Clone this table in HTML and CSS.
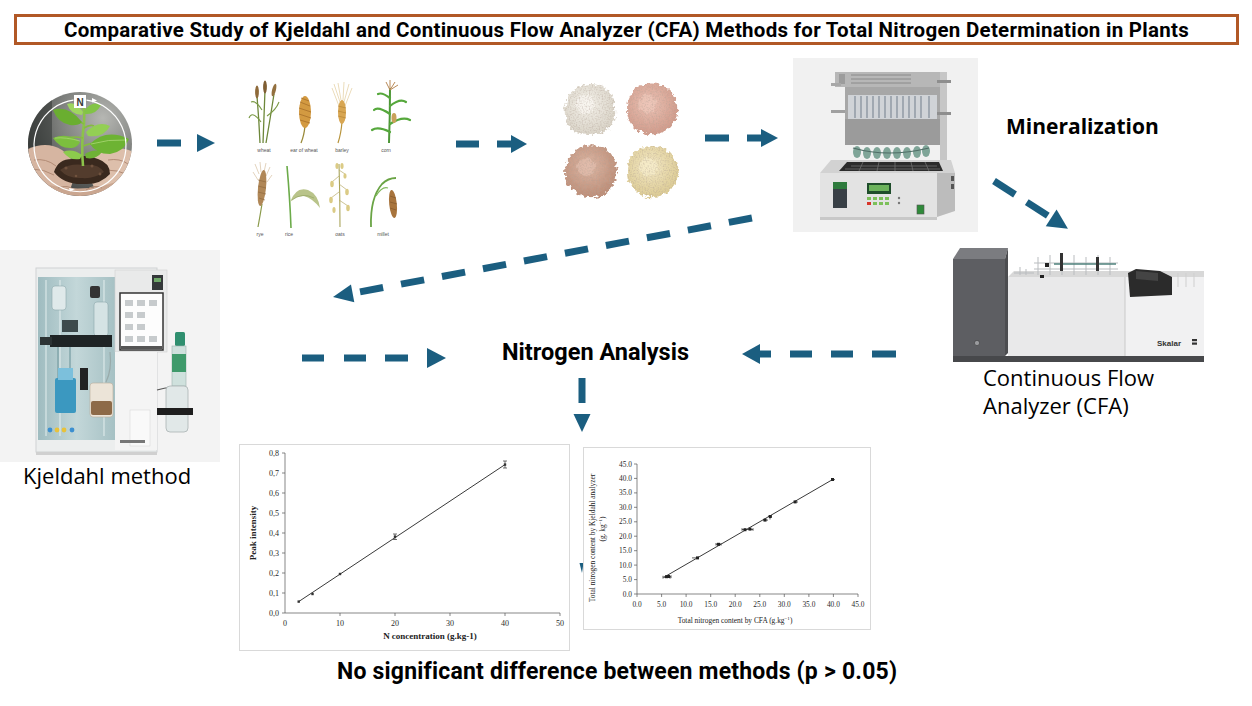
FILE: index.html
```html
<!DOCTYPE html>
<html lang="en">
<head>
<meta charset="utf-8">
<title>Kjeldahl vs CFA – Total Nitrogen</title>
<link rel="stylesheet" href="styles.css">
</head>
<body>
<div class="canvas">
  <header class="title">Comparative Study of Kjeldahl and Continuous Flow Analyzer (CFA) Methods for Total Nitrogen Determination in Plants</header>

  <!-- plant with nitrogen cycle -->
  <div class="node plant">
    <svg viewBox="0 0 104 104" width="104" height="104">
      <defs>
        <radialGradient id="pbg" cx="0.72" cy="0.25" r="0.85">
          <stop offset="0" stop-color="#b6b7b3"/>
          <stop offset="0.5" stop-color="#7d7f7c"/>
          <stop offset="1" stop-color="#363938"/>
        </radialGradient>
        <clipPath id="pclip"><circle cx="52" cy="52" r="52"/></clipPath>
      </defs>
      <g clip-path="url(#pclip)">
        <rect width="104" height="104" fill="url(#pbg)"/>
        <rect x="0" y="0" width="24" height="62" fill="#2c2f2e" opacity="0.5"/>
        <path d="M-2 58 Q18 48 34 58 Q46 66 48 80 L40 104 L-2 104Z" fill="#d6b5a1"/>
        <path d="M106 60 Q86 52 72 60 Q60 70 60 82 L70 104 L106 104Z" fill="#ddbfab"/>
        <path d="M0 86 Q52 108 104 84 L104 104 L0 104Z" fill="#caa690"/>
        <path d="M6 68 Q18 66 28 74 M4 77 Q16 77 26 83 M80 68 Q92 66 100 72 M78 78 Q90 78 98 82 M30 96 Q40 92 46 98 M58 98 Q66 92 74 96" stroke="#b28b75" stroke-width="1" fill="none"/>
        <path d="M26 80 Q30 67 44 67 Q56 61 70 67 Q82 71 82 82 Q72 93 56 92 Q36 93 26 80Z" fill="#3a291e"/>
        <path d="M32 78 Q42 71 56 73 Q70 71 76 80 Q66 87 54 86 Q40 87 32 78Z" fill="#5a4131" opacity="0.8"/>
        <g fill="#70523e"><circle cx="38" cy="76" r="1.6"/><circle cx="64" cy="74" r="1.5"/><circle cx="48" cy="84" r="1.3"/><circle cx="72" cy="82" r="1.4"/></g>
        <path d="M55 74 Q53 52 56 32 Q57 22 55 12" stroke="#8cc24a" stroke-width="2.6" fill="none"/>
        <path d="M55 54 Q64 50 70 52 M55 46 Q46 44 40 46 M56 32 Q48 28 44 26 M56 36 Q62 32 66 34" stroke="#86bb42" stroke-width="1.6" fill="none"/>
        <path d="M62 52 Q78 36 101 47 Q96 60 82 62 Q68 62 62 52Z" fill="#6db333"/>
        <path d="M63 52 Q80 47 99 48" stroke="#b3dd7f" stroke-width="0.7" fill="none"/>
        <path d="M58 40 Q70 28 82 34 Q76 46 60 44Z" fill="#93cf54"/>
        <path d="M52 50 Q40 40 25 46 Q32 57 44 56 Q50 55 52 50Z" fill="#7cbf3e"/>
        <path d="M52 49 Q38 45 27 46" stroke="#b8e084" stroke-width="0.6" fill="none"/>
        <path d="M54 30 Q40 13 25 18 Q30 31 42 33 Q50 34 54 30Z" fill="#6aae30"/>
        <path d="M55 20 Q48 9 39 12 Q43 23 54 23Z" fill="#9fd660"/>
        <path d="M56 19 Q64 8 73 13 Q68 23 57 22Z" fill="#82c446"/>
        <path d="M54 63 Q44 56 35 60 Q42 69 52 67Z" fill="#8ccb4c"/>
        <path d="M57 62 Q66 56 74 60 Q68 68 58 66Z" fill="#6fb236"/>
      </g>
      <path d="M45.5 8.2 A46 46 0 1 0 58.5 8.2" fill="none" stroke="#fff" stroke-width="1.2"/>
      <polygon points="64,6 69,8.5 64,10.5" fill="#fff"/>
      <polygon points="41,96 47,97 42,99.5" fill="#fff"/>
      <rect x="46" y="3" width="12" height="13" fill="#fff"/>
      <text x="52" y="13.5" text-anchor="middle" class="n-letter">N</text>
    </svg>
  </div>

  <!-- cereal illustrations -->
  <div class="node grains">
    <svg viewBox="0 0 165 162" width="165" height="162">
      <path d="M12 63 Q11 40 9 16 M15 63 Q16 38 17 10 M18 63 Q22 40 26 14" stroke="#6d873a" stroke-width="1.3" fill="none"/>
      <path d="M13 42 Q4 30 1 38 M14 30 Q8 20 3 22 M19 36 Q28 30 31 22" stroke="#7b9a46" stroke-width="1.1" fill="none"/>
      <ellipse cx="9" cy="12" rx="1.9" ry="6.5" fill="#8e6a3a"/>
      <ellipse cx="17" cy="7" rx="1.9" ry="6.5" fill="#7f5e33"/>
      <ellipse cx="26" cy="10" rx="1.9" ry="6.5" fill="#93703f" transform="rotate(14 26 10)"/>
      <path d="M57 46 Q56 56 53 63" stroke="#9a8a3a" stroke-width="1.3" fill="none"/>
      <ellipse cx="57" cy="32" rx="6" ry="16" fill="#d39a41"/>
      <path d="M52 22 L62 26 M51 28 L63 32 M51 34 L63 38 M52 40 L62 43 M53 18 L61 21" stroke="#a8702a" stroke-width="0.8"/>
      <path d="M94 42 Q93 54 90 63" stroke="#b8943c" stroke-width="1.2" fill="none"/>
      <path d="M92 22 L86 4 M93 20 L90 3 M95 20 L96 2 M96 22 L101 4 M97 26 L104 8 M91 26 L84 8" stroke="#d7b875" stroke-width="0.5"/>
      <ellipse cx="94" cy="32" rx="4" ry="12" fill="#d8a652"/>
      <path d="M90 26 L98 28 M90 31 L98 33 M90 36 L98 38" stroke="#b07f30" stroke-width="0.6"/>
      <path d="M141 63 Q142 36 142 8" stroke="#4c9636" stroke-width="2" fill="none"/>
      <path d="M142 52 Q130 46 124 50 M142 44 Q154 36 162 40 M142 34 Q130 26 126 30 M142 26 Q152 18 158 22 M142 18 Q134 12 130 14" stroke="#56a83c" stroke-width="2.2" fill="none" stroke-linecap="round"/>
      <path d="M142 10 L138 2 M142 9 L142 0 M142 10 L147 2 M142 10 L150 5" stroke="#b98a58" stroke-width="1" fill="none"/>
      <ellipse cx="146" cy="38" rx="2.5" ry="5" fill="#c9a15a"/>
      <path d="M14 124 Q12 136 10 147" stroke="#8a9a4a" stroke-width="1.2" fill="none"/>
      <path d="M11 94 L7 84 M13 92 L12 82 M16 92 L18 83 M18 96 L22 87 M10 100 L5 92 M19 102 L24 95" stroke="#c7a77a" stroke-width="0.5"/>
      <ellipse cx="14" cy="108" rx="4" ry="18" fill="#b08757" transform="rotate(6 14 108)"/>
      <path d="M10 100 L18 102 M10 106 L18 108 M10 112 L18 114 M11 118 L17 120" stroke="#8b653a" stroke-width="0.6"/>
      <path d="M43 148 Q42 120 39 86" stroke="#6cab4a" stroke-width="1.6" fill="none"/>
      <path d="M42 122 Q48 106 60 110 Q70 114 72 128 Q64 118 56 116 Q48 116 42 122Z" fill="#b9c48a"/>
      <path d="M44 120 Q54 112 66 118" stroke="#8fa05a" stroke-width="0.6" fill="none"/>
      <path d="M92 147 Q92 116 91 84" stroke="#a9a45a" stroke-width="1.1" fill="none"/>
      <path d="M91 96 L84 102 M91 104 L99 110 M91 112 L83 118 M91 120 L100 126 M91 90 L97 94" stroke="#b8ab68" stroke-width="0.7"/>
      <g fill="#dbcb86">
        <ellipse cx="84" cy="104" rx="1.8" ry="3.2"/><ellipse cx="99" cy="112" rx="1.8" ry="3.2"/>
        <ellipse cx="83" cy="120" rx="1.8" ry="3.2"/><ellipse cx="100" cy="128" rx="1.8" ry="3.2"/>
        <ellipse cx="97" cy="96" rx="1.6" ry="2.8"/><ellipse cx="89" cy="86" rx="1.6" ry="3"/>
        <ellipse cx="94" cy="86" rx="1.6" ry="3"/><ellipse cx="86" cy="130" rx="1.6" ry="3"/>
      </g>
      <path d="M123 147 Q122 118 134 104 Q140 98 148 98" stroke="#6aa445" stroke-width="1.8" fill="none"/>
      <path d="M128 116 Q134 106 140 108" stroke="#7fb85a" stroke-width="1.2" fill="none"/>
      <ellipse cx="145" cy="124" rx="3.8" ry="14" fill="#a8743d" transform="rotate(-6 145 124)"/>
      <path d="M142 116 L148 118 M142 122 L149 124 M142 128 L148 130" stroke="#7c5228" stroke-width="0.6"/>
      <g class="grain-label">
        <text x="16" y="72">wheat</text>
        <text x="56" y="72">ear of wheat</text>
        <text x="94" y="72">barley</text>
        <text x="138" y="72">corn</text>
        <text x="12" y="156">rye</text>
        <text x="41" y="156">rice</text>
        <text x="92" y="156">oats</text>
        <text x="135" y="156">millet</text>
      </g>
    </svg>
  </div>

  <!-- powders -->
  <div class="node powders">
    <svg viewBox="0 0 140 130" width="140" height="130">
      <defs>
        <filter id="rough" x="-25%" y="-25%" width="150%" height="150%">
          <feTurbulence type="fractalNoise" baseFrequency="0.28" numOctaves="2" seed="4" result="n"/>
          <feDisplacementMap in="SourceGraphic" in2="n" scale="7" xChannelSelector="R" yChannelSelector="G"/>
        </filter>
        <filter id="speck" x="-10%" y="-10%" width="120%" height="120%">
          <feTurbulence type="fractalNoise" baseFrequency="0.7" numOctaves="1" seed="9" result="t"/>
          <feColorMatrix in="t" type="matrix" values="0 0 0 0 0.45  0 0 0 0 0.36  0 0 0 0 0.3  0 0 0 1.4 -0.62" result="dots"/>
          <feComposite in="dots" in2="SourceGraphic" operator="in" result="d2"/>
          <feMerge><feMergeNode in="SourceGraphic"/><feMergeNode in="d2"/></feMerge>
        </filter>
        <radialGradient id="pw1" cx="0.45" cy="0.4" r="0.6"><stop offset="0" stop-color="#f4f1ea"/><stop offset="1" stop-color="#dad4c8"/></radialGradient>
        <radialGradient id="pw2" cx="0.45" cy="0.4" r="0.6"><stop offset="0" stop-color="#ebc2b5"/><stop offset="1" stop-color="#d19b8b"/></radialGradient>
        <radialGradient id="pw3" cx="0.45" cy="0.4" r="0.6"><stop offset="0" stop-color="#ddb7a5"/><stop offset="1" stop-color="#bd8d77"/></radialGradient>
        <radialGradient id="pw4" cx="0.45" cy="0.4" r="0.6"><stop offset="0" stop-color="#f4e9c6"/><stop offset="1" stop-color="#dccb94"/></radialGradient>
      </defs>
      <g filter="url(#speck)">
        <g filter="url(#rough)">
          <path d="M10 38 Q8 20 22 12 Q34 5 46 10 Q60 18 60 32 Q62 50 46 57 Q30 62 18 54 Q10 48 10 38Z" fill="url(#pw1)"/>
          <path d="M72 34 Q72 16 86 9 Q100 5 112 12 Q124 22 122 38 Q118 54 102 58 Q86 60 78 50 Q72 44 72 34Z" fill="url(#pw2)"/>
          <path d="M10 98 Q10 80 24 72 Q38 66 50 73 Q62 82 62 96 Q60 114 46 120 Q30 124 18 114 Q10 108 10 98Z" fill="url(#pw3)"/>
          <path d="M72 96 Q72 80 86 72 Q100 67 112 74 Q124 84 124 98 Q120 114 106 120 Q88 124 80 114 Q72 106 72 96Z" fill="url(#pw4)"/>
          <circle cx="30" cy="28" r="9" fill="#fbf9f4" opacity="0.6"/>
          <circle cx="92" cy="28" r="9" fill="#f0cabd" opacity="0.6"/>
          <circle cx="31" cy="91" r="9" fill="#e4c0b0" opacity="0.6"/>
          <circle cx="93" cy="91" r="9" fill="#f7eccb" opacity="0.7"/>
        </g>
      </g>
    </svg>
  </div>

  <!-- digestion block -->
  <div class="node digestor">
    <svg viewBox="0 0 185 174" width="185" height="174">
      <rect width="185" height="174" fill="#f1f1f1"/>
      <rect x="42" y="14" width="112" height="15" fill="#b7b7b7"/>
      <path d="M58 17 h60 M58 21 h60 M58 25 h60" stroke="#8a8a8a" stroke-width="1"/>
      <rect x="46" y="16" width="6" height="10" fill="#9c9c9c"/>
      <rect x="38" y="25" width="10" height="3" fill="#a8a8a8"/>
      <rect x="52" y="29" width="95" height="58" fill="#a7a7a7"/>
      <rect x="55" y="37" width="89" height="24" fill="#d0d3d7"/>
      <path d="M62 38v22 M68 38v22 M74 38v22 M80 38v22 M86 38v22 M92 38v22 M98 38v22 M104 38v22 M110 38v22 M116 38v22 M122 38v22 M128 38v22 M136 38v22" stroke="#8d96a2" stroke-width="1.4"/>
      <rect x="52" y="61" width="95" height="26" fill="#9b9b9b"/>
      <rect x="147" y="14" width="7" height="96" fill="#c6c6c6"/>
      <rect x="144" y="22" width="14" height="3" fill="#8e8e8e"/>
      <rect x="144" y="54" width="14" height="3" fill="#8e8e8e"/>
      <rect x="38" y="52" width="14" height="3" fill="#a0a0a0"/>
      <g fill="#7fa598">
        <ellipse cx="64" cy="94" rx="4" ry="6"/><ellipse cx="74" cy="95" rx="4" ry="6"/><ellipse cx="84" cy="95" rx="4" ry="6"/>
        <ellipse cx="94" cy="95" rx="4" ry="6"/><ellipse cx="104" cy="95" rx="4" ry="6"/><ellipse cx="114" cy="95" rx="4" ry="6"/>
        <ellipse cx="124" cy="94" rx="4" ry="6"/><ellipse cx="133" cy="93" rx="4" ry="6"/>
      </g>
      <path d="M60 90 Q95 100 136 90" stroke="#4f6d66" stroke-width="1.2" fill="none"/>
      <polygon points="27,115 38,102 158,102 162,115" fill="#d2d2d2"/>
      <polygon points="46,113 54,104 146,104 150,113" fill="#2c2c2c"/>
      <path d="M58 108 h86 M52 111 h95 M70 104 l-4 9 M86 104 l-2 9 M102 104 l0 9 M118 104 l2 9 M132 104 l4 9" stroke="#6f6f6f" stroke-width="0.8"/>
      <rect x="27" y="115" width="117" height="44" fill="#e3e3e3"/>
      <polygon points="144,115 162,115 162,153 144,159" fill="#bcbcbc"/>
      <rect x="158" y="118" width="3" height="5" fill="#555"/>
      <rect x="158" y="126" width="3" height="5" fill="#555"/>
      <rect x="40" y="124" width="14" height="7" fill="#2f7b3d"/>
      <rect x="40" y="131" width="14" height="19" fill="#394046"/>
      <rect x="74" y="125" width="24" height="11" fill="#1f4d2b"/>
      <rect x="76" y="127" width="20" height="6" fill="#6cb35c"/>
      <g fill="#7cc05a">
        <rect x="80" y="139" width="4" height="3"/><rect x="86" y="139" width="4" height="3"/><rect x="92" y="139" width="4" height="3"/>
        <rect x="80" y="144" width="4" height="3"/><rect x="86" y="144" width="4" height="3"/><rect x="92" y="144" width="4" height="3"/>
        <rect x="74" y="139" width="4" height="3"/>
      </g>
      <rect x="74" y="144" width="4" height="3" fill="#d8352a"/>
      <circle cx="106" cy="140" r="1.2" fill="#777"/><circle cx="106" cy="145" r="1.2" fill="#777"/>
      <rect x="124" y="147" width="7" height="9" fill="#2f8a3a" stroke="#555" stroke-width="0.6"/>
      <rect x="27" y="159" width="117" height="3" fill="#c8c8c8"/>
    </svg>
  </div>

  <!-- CFA instrument -->
  <div class="node cfa">
    <svg viewBox="0 0 255 116" width="255" height="116">
      <polygon points="3,12 10,1 58,1 55,12" fill="#7b7c80"/>
      <rect x="3" y="12" width="52" height="97" fill="#5d5e62"/>
      <polygon points="55,12 58,1 58,106 55,109" fill="#4c4d50"/>
      <polygon points="58,30 64,24 254,24 254,30" fill="#d8d8d8"/>
      <rect x="58" y="30" width="117" height="79" fill="#e9e9ea"/>
      <rect x="175" y="30" width="79" height="79" fill="#f1f1f2"/>
      <path d="M175 30 V109" stroke="#c9c9c9" stroke-width="1"/>
      <g stroke="#b9bcbf" stroke-width="1" fill="none">
        <path d="M88 10 V28 M100 8 V28 M112 10 V28 M124 8 V28 M136 10 V28 M148 8 V28 M160 10 V28"/>
        <path d="M84 16 H168 M84 22 H168"/>
        <path d="M64 26 h20 M70 20 V28 M76 22 V28"/>
      </g>
      <path d="M104 17 H166" stroke="#4f827c" stroke-width="1.6"/>
      <rect x="110" y="6" width="3" height="18" fill="#333"/>
      <rect x="146" y="10" width="3" height="14" fill="#333"/>
      <rect x="95" y="16" width="4" height="4" fill="#222"/>
      <rect x="90" y="28" width="4" height="3" fill="#222"/>
      <polygon points="178,26 186,22 210,24 222,30 222,48 180,50" fill="#2b2b2b"/>
      <polygon points="186,24 208,26 208,34 186,32" fill="#444"/>
      <path d="M228 26 V40 M236 26 V40 M244 26 V40" stroke="#cfcfcf" stroke-width="1"/>
      <rect x="3" y="109" width="251" height="6" fill="#47484b"/>
      <circle cx="27" cy="96" r="2.6" fill="#9a9b9e" stroke="#3a3a3c" stroke-width="0.6"/>
      <text x="207" y="99" class="skalar">Skalar</text>
      <rect x="242" y="92" width="5" height="2.2" fill="#333"/>
      <rect x="242" y="95.5" width="5" height="2.2" fill="#333"/>
    </svg>
  </div>

  <!-- Kjeldahl distillation unit -->
  <div class="node kjeldahl">
    <svg viewBox="0 0 220 212" width="220" height="212">
      <defs>
        <linearGradient id="glass" x1="0" y1="0" x2="1" y2="0">
          <stop offset="0" stop-color="#9fbcc0"/><stop offset="0.5" stop-color="#c3d7d9"/><stop offset="1" stop-color="#a6c1c4"/>
        </linearGradient>
      </defs>
      <rect width="220" height="212" fill="#f3f3f3"/>
      <rect x="36" y="18" width="121" height="184" fill="#eceeee" stroke="#cfd2d3" stroke-width="1"/>
      <rect x="38" y="27" width="77" height="163" fill="url(#glass)"/>
      <path d="M46 30 V186 M60 30 V186 M104 30 V186" stroke="#e6f0f1" stroke-width="1.2" opacity="0.8"/>
      <rect x="52" y="36" width="14" height="24" rx="3" fill="#dfe9ea" stroke="#8fa9ad" stroke-width="0.6"/>
      <rect x="90" y="36" width="10" height="12" rx="2" fill="#333"/>
      <rect x="94" y="52" width="14" height="34" rx="3" fill="#d5e3e4" stroke="#8fa9ad" stroke-width="0.6"/>
      <rect x="62" y="70" width="16" height="12" fill="#3d4a4c"/>
      <rect x="50" y="85" width="62" height="12" fill="#1f2425"/>
      <rect x="40" y="87" width="12" height="8" fill="#2c3334"/>
      <path d="M58 97 V160 M70 97 V160" stroke="#7fa3a8" stroke-width="1.4"/>
      <rect x="55" y="128" width="21" height="35" rx="2" fill="#3b98c0"/>
      <rect x="58" y="118" width="15" height="12" fill="#7cc0dc"/>
      <rect x="80" y="118" width="8" height="22" fill="#222"/>
      <rect x="90" y="133" width="23" height="34" rx="3" fill="#ece4d8" stroke="#b9ad9c" stroke-width="0.6"/>
      <rect x="91" y="151" width="21" height="14" rx="2" fill="#8d6a48"/>
      <circle cx="50" cy="180" r="2.4" fill="#3c8fd0"/><circle cx="57" cy="180" r="2.4" fill="#e8c23a"/>
      <circle cx="64" cy="180" r="2.4" fill="#e8c23a"/><circle cx="72" cy="180" r="2.4" fill="#3c8fd0"/>
      <rect x="115" y="20" width="52" height="82" fill="#e9eaea" stroke="#cfcfcf" stroke-width="0.6"/>
      <rect x="152" y="25" width="11" height="15" fill="#34383a"/>
      <rect x="154" y="28" width="7" height="4" fill="#6fa86a"/>
      <rect x="120" y="43" width="43" height="57" fill="#fdfdfd" stroke="#333" stroke-width="1.5"/>
      <g fill="#c7cbcd">
        <rect x="125" y="50" width="8" height="6"/><rect x="137" y="50" width="8" height="6"/><rect x="149" y="50" width="8" height="6"/>
        <rect x="125" y="62" width="8" height="6"/><rect x="137" y="62" width="8" height="6"/>
        <rect x="125" y="74" width="8" height="6"/><rect x="137" y="74" width="8" height="6"/>
        <rect x="125" y="86" width="8" height="6"/><rect x="137" y="86" width="8" height="6"/><rect x="149" y="86" width="8" height="6"/>
      </g>
      <rect x="121" y="96" width="41" height="3" fill="#555"/>
      <rect x="115" y="102" width="42" height="98" fill="#f4f4f4"/>
      <rect x="130" y="160" width="20" height="36" fill="#f9f9f9" stroke="#d9d9d9" stroke-width="0.6"/>
      <rect x="120" y="190" width="25" height="3" fill="#777"/>
      <path d="M110 102 Q112 120 106 132" stroke="#9aa" stroke-width="1.2" fill="none"/>
      <path d="M157 140 Q164 138 172 137" stroke="#555" stroke-width="1.2" fill="none"/>
      <rect x="175" y="82" width="10" height="14" rx="1.5" fill="#2f8f6f"/>
      <rect x="172" y="96" width="14" height="40" fill="#cfe1dd" stroke="#9fb2ae" stroke-width="0.6"/>
      <rect x="172" y="104" width="14" height="18" fill="#3f9a6b"/>
      <rect x="166" y="136" width="22" height="46" rx="4" fill="#e1e8e8" stroke="#a9b3b3" stroke-width="0.8"/>
      <rect x="157" y="158" width="36" height="7" fill="#1e1e1e"/>
      <rect x="36" y="202" width="121" height="3" fill="#d0d0d0"/>
    </svg>
  </div>

  <!-- connectors -->
  <svg class="connectors" viewBox="0 0 1252 706" width="1252" height="706">
    <g fill="#1b5e80">
      <rect x="157" y="139.5" width="24" height="7"/>
      <polygon points="197,134 215,143 197,152"/>
      <rect x="456" y="140.5" width="23" height="7"/>
      <rect x="497" y="140.5" width="15" height="7"/>
      <polygon points="511,135 527,144 511,153"/>
      <rect x="705" y="134.5" width="24" height="7"/>
      <rect x="747" y="134.5" width="15" height="7"/>
      <polygon points="761,129 778,138 761,147"/>
      <g transform="translate(994 181) rotate(32.8)">
        <rect x="0" y="-3.5" width="25" height="7"/>
        <rect x="39" y="-3.5" width="25" height="7"/>
        <polygon points="68,-10 88,0 68,10"/>
      </g>
      <g transform="translate(333 297) rotate(-10.68)">
        <polygon points="0,0 20,-9 20,9"/>
        <rect x="27.5" y="-3.5" width="23.5" height="7"/>
        <rect x="69.2" y="-3.5" width="23.5" height="7"/>
        <rect x="110.9" y="-3.5" width="23.5" height="7"/>
        <rect x="152.6" y="-3.5" width="23.5" height="7"/>
        <rect x="194.3" y="-3.5" width="23.5" height="7"/>
        <rect x="236" y="-3.5" width="23.5" height="7"/>
        <rect x="277.7" y="-3.5" width="23.5" height="7"/>
        <rect x="319.4" y="-3.5" width="23.5" height="7"/>
        <rect x="361.1" y="-3.5" width="23.5" height="7"/>
        <rect x="402.8" y="-3.5" width="23.5" height="7"/>
      </g>
      <rect x="302" y="354.5" width="22" height="7"/>
      <rect x="344" y="354.5" width="22" height="7"/>
      <rect x="385" y="354.5" width="23" height="7"/>
      <polygon points="427,348 446,358 427,368"/>
      <polygon points="742,354 760,344 760,364"/>
      <rect x="759" y="350.5" width="12" height="7"/>
      <rect x="790" y="350.5" width="22" height="7"/>
      <rect x="831" y="350.5" width="22" height="7"/>
      <rect x="872" y="350.5" width="24" height="7"/>
      <rect x="578.5" y="378" width="7" height="25"/>
      <polygon points="573.5,414 590.5,414 582,432"/>
      <polygon points="579.5,563 583.5,563 582,573"/>
    </g>
  </svg>

  <!-- calibration chart -->
  <figure class="node chart chart-cal">
    <svg viewBox="0 0 331 207" width="331" height="207">
      <rect x="0.5" y="0.5" width="330" height="206" fill="#fff" stroke="#d9d9d9"/>
      <g stroke="#555" stroke-width="0.7" fill="none">
        <path d="M46 9 V169 H321"/>
        <path d="M43 9 H46 M43 29 H46 M43 49 H46 M43 69 H46 M43 89 H46 M43 109 H46 M43 129 H46 M43 149 H46 M43 169 H46"/>
        <path d="M101 169 V172 M156 169 V172 M211 169 V172 M266 169 V172 M321 169 V172"/>
      </g>
      <g class="tick" text-anchor="end">
        <text x="40" y="12">0,8</text><text x="40" y="32">0,7</text><text x="40" y="52">0,6</text>
        <text x="40" y="72">0,5</text><text x="40" y="92">0,4</text><text x="40" y="112">0,3</text>
        <text x="40" y="132">0,2</text><text x="40" y="152">0,1</text><text x="40" y="172">0,0</text>
      </g>
      <g class="tick" text-anchor="middle">
        <text x="46" y="182">0</text><text x="101" y="182">10</text><text x="156" y="182">20</text>
        <text x="211" y="182">30</text><text x="266" y="182">40</text><text x="321" y="182">50</text>
      </g>
      <text class="axis-title bold" x="191" y="195" text-anchor="middle">N concentration (g.kg-1)</text>
      <text class="axis-title bold" x="0" y="0" text-anchor="middle" transform="translate(17 89) rotate(-90)">Peak intensity</text>
      <path d="M59.7 157.6 L266 20.6" stroke="#222" stroke-width="0.9"/>
      <g stroke="#333" stroke-width="0.7">
        <path d="M156 90 V95.5 M154 90 H158 M154 95.5 H158"/>
        <path d="M266 17 V24 M264 17 H268 M264 24 H268"/>
      </g>
      <g fill="#333">
        <rect x="58.5" y="156.4" width="2.4" height="2.4"/><rect x="72.3" y="148.8" width="2.4" height="2.4"/>
        <rect x="99.8" y="128.8" width="2.4" height="2.4"/><rect x="154.8" y="91.5" width="2.4" height="2.4"/>
        <rect x="264.8" y="19.4" width="2.4" height="2.4"/>
      </g>
    </svg>
  </figure>

  <!-- comparison chart -->
  <figure class="node chart chart-cmp">
    <svg viewBox="0 0 288 183" width="288" height="183">
      <rect x="0.5" y="0.5" width="287" height="182" fill="#fff" stroke="#d9d9d9"/>
      <g stroke="#555" stroke-width="0.7" fill="none">
        <path d="M54 17 V147 H275"/>
        <path d="M51 17 H54 M51 31.4 H54 M51 45.9 H54 M51 60.3 H54 M51 74.8 H54 M51 89.2 H54 M51 103.7 H54 M51 118.1 H54 M51 132.6 H54 M51 147 H54"/>
        <path d="M54 147 V150 M78.6 147 V150 M103.1 147 V150 M127.7 147 V150 M152.2 147 V150 M176.8 147 V150 M201.3 147 V150 M225.9 147 V150 M250.4 147 V150 M275 147 V150"/>
      </g>
      <g class="tick small" text-anchor="end">
        <text x="49" y="19.5">45.0</text><text x="49" y="33.9">40.0</text><text x="49" y="48.4">35.0</text>
        <text x="49" y="62.8">30.0</text><text x="49" y="77.3">25.0</text><text x="49" y="91.7">20.0</text>
        <text x="49" y="106.2">15.0</text><text x="49" y="120.6">10.0</text><text x="49" y="135.1">5.0</text>
        <text x="49" y="149.5">0.0</text>
      </g>
      <g class="tick small" text-anchor="middle">
        <text x="54" y="160">0.0</text><text x="78.6" y="160">5.0</text><text x="103.1" y="160">10.0</text>
        <text x="127.7" y="160">15.0</text><text x="152.2" y="160">20.0</text><text x="176.8" y="160">25.0</text>
        <text x="201.3" y="160">30.0</text><text x="225.9" y="160">35.0</text><text x="250.4" y="160">40.0</text>
        <text x="275" y="160">45.0</text>
      </g>
      <text class="axis-title reg" x="152" y="176" text-anchor="middle">Total nitrogen content by CFA (g.kg<tspan dy="-3" font-size="5">−1</tspan><tspan dy="3">)</tspan></text>
      <g transform="rotate(-90)" class="axis-title reg" text-anchor="middle">
        <text x="-91" y="12">Total nitrogen content by Kjeldahl analyzer</text>
        <text x="-82" y="22">(g. kg<tspan dy="-3" font-size="5">−1</tspan><tspan dy="3">)</tspan></text>
      </g>
      <path d="M81 130.2 L249.5 32.6" stroke="#222" stroke-width="0.9"/>
      <g stroke="#333" stroke-width="0.8">
        <path d="M80 130.2 H87 M80 128.8 V131.6 M87 128.8 V131.6"/>
        <path d="M82 129.7 H88 M88 128.3 V131.1"/>
        <path d="M109 110.9 H113"/>
        <path d="M133 97.3 H138 M133 96 V98.6 M138 96 V98.6"/>
        <path d="M159 82.5 H170 M159 81.2 V83.8 M170 81.2 V83.8"/>
        <path d="M180 73.1 H185 M187 68.1 V72.5 M185 69.2 H189"/>
        <path d="M211 55 H215"/>
        <path d="M248 32.6 H252"/>
      </g>
      <g fill="#222">
        <rect x="82" y="128.2" width="3" height="3"/><rect x="84" y="128" width="3" height="3"/>
        <rect x="113" y="109.4" width="3" height="3"/><rect x="134" y="95.8" width="3" height="3"/>
        <rect x="160.5" y="81.2" width="3" height="3"/><rect x="165.5" y="80.6" width="3" height="3"/>
        <rect x="180.5" y="71.6" width="3" height="3"/><rect x="185.8" y="68" width="3" height="3"/>
        <rect x="210.6" y="53.4" width="3" height="3"/><rect x="248" y="31" width="3" height="3"/>
      </g>
    </svg>
  </figure>

  <div class="label bold-label mineral">Mineralization</div>
  <div class="label narrow-label nitro">Nitrogen Analysis</div>
  <div class="label plain-label cfa-label">Continuous Flow<br>Analyzer (CFA)</div>
  <div class="label plain-label kj-label">Kjeldahl method</div>
  <p class="label narrow-label conclusion">No significant difference between methods (p &gt; 0.05)</p>
</div>
</body>
</html>
```

FILE: styles.css
```css
* { box-sizing: border-box; }
html, body { margin: 0; padding: 0; background: #ffffff; }
body { font-family: "Open Sans", "Liberation Sans", sans-serif; color: #000; }

.canvas {
  position: relative;
  width: 1252px;
  height: 706px;
  overflow: hidden;
  background: #ffffff;
  padding-top: 14px;
  padding-left: 14px;
}

.title {
  width: 1225px;
  height: 31px;
  border: 3px solid #b15826;
  display: flex;
  align-items: center;
  justify-content: center;
  font-family: Roboto, "Liberation Sans", sans-serif;
  font-weight: 700;
  font-size: 20.5px;
  letter-spacing: 0.28px;
  color: #000;
  white-space: nowrap;
}

.node { position: absolute; margin: 0; }
.node svg { display: block; }

.plant { left: 28px; top: 92px; width: 104px; height: 104px; }
.grains { left: 248px; top: 80px; }
.powders { left: 555px; top: 76px; }
.digestor { left: 793px; top: 58px; }
.cfa { left: 950px; top: 247px; }
.kjeldahl { left: 0; top: 250px; }
.chart-cal { left: 239px; top: 444px; }
.chart-cmp { left: 583px; top: 447px; }

.connectors { position: absolute; left: 0; top: 0; pointer-events: none; }

.n-letter { font-family: "Liberation Sans", Arial, sans-serif; font-size: 10px; font-weight: 700; fill: #3a3a3a; }
.grain-label text { font-family: "Liberation Sans", Arial, sans-serif; font-size: 5px; fill: #555; text-anchor: middle; }
.skalar { font-family: "Liberation Sans", Arial, sans-serif; font-size: 8px; font-weight: 700; fill: #333; }

.tick { font-family: "Liberation Serif", "Times New Roman", serif; font-size: 8px; fill: #2a2a2a; }
.tick.small { font-size: 7.4px; }
.axis-title { font-family: "Liberation Serif", "Times New Roman", serif; fill: #222; }
.axis-title.bold { font-size: 9px; font-weight: 700; }
.axis-title.reg { font-size: 7.4px; }

.label { position: absolute; margin: 0; white-space: nowrap; color: #000; }
.bold-label { font-family: "Open Sans", "Liberation Sans", sans-serif; font-weight: 700; font-size: 21px; line-height: 24px; }
.narrow-label { font-family: Roboto, "Liberation Sans", sans-serif; font-weight: 700; font-size: 23.5px; line-height: 28px; }
.plain-label { font-family: "Open Sans", "Liberation Sans", sans-serif; font-weight: 400; font-size: 22px; line-height: 28px; }

.mineral { left: 1006px; top: 114px; }
.nitro { left: 502px; top: 338px; }
.cfa-label { left: 983px; top: 363px; }
.kj-label { left: 23px; top: 461px; }
.conclusion { left: 337px; top: 658px; font-size: 23px; letter-spacing: 0.2px; }
```
